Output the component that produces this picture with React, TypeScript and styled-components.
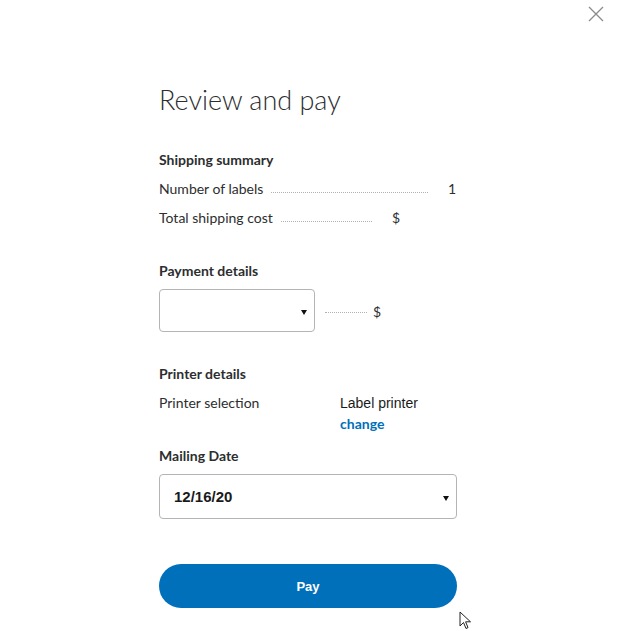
import React from 'react';
import styled, { createGlobalStyle } from 'styled-components';

const GlobalStyle = createGlobalStyle`
  html, body {
    margin: 0;
    padding: 0;
    background: #fff;
  }
  body {
    font-family: Lato, "Open Sans", sans-serif;
    color: #2c2e2f;
  }
`;

const Page = styled.div`
  position: relative;
  width: 624px;
  height: 631px;
  overflow: hidden;
  background: #fff;
`;

const CloseButton = styled.button`
  position: absolute;
  top: 5px;
  right: 19px;
  width: 18px;
  height: 18px;
  padding: 0;
  border: 0;
  background: none;
  cursor: pointer;
`;

const Content = styled.div`
  display: flex;
  flex-direction: column;
  width: 298px;
  margin-left: 159px;
  padding-top: 83px;
`;

const Title = styled.h1`
  margin: 0 0 28px;
  font-size: 27px;
  line-height: 34px;
  font-weight: 300;
  color: #2c2e2f;
`;

const SectionTitle = styled.h2<{ $gap?: number }>`
  margin: 0 0 ${({ $gap }) => $gap ?? 0}px;
  font-size: 14px;
  line-height: 29px;
  font-weight: 700;
  color: #2c2e2f;
`;

const Section = styled.section<{ $after: number }>`
  display: flex;
  flex-direction: column;
  margin-bottom: ${({ $after }) => $after}px;
`;

const SummaryRow = styled.div<{ $width: number }>`
  display: flex;
  align-items: baseline;
  width: ${({ $width }) => $width}px;
  font-size: 14px;
  line-height: 29px;
`;

const Leader = styled.span`
  flex: 1;
  margin-left: 8px;
  border-bottom: 1px dotted #b0b0b0;
  align-self: flex-end;
  margin-bottom: 10px;
`;

const Amount = styled.span`
  margin-left: 20px;
`;

const PaymentRow = styled.div`
  display: flex;
  align-items: center;
  font-size: 14px;
`;

const Select = styled.div<{ $width: number; $height: number }>`
  position: relative;
  display: flex;
  align-items: center;
  box-sizing: border-box;
  width: ${({ $width }) => $width}px;
  height: ${({ $height }) => $height}px;
  padding: 0 14px;
  border: 1px solid #b4b4b4;
  border-radius: 4px;
  background: #fff;
  font-family: "Liberation Sans", Arial, sans-serif;
  font-size: 15px;
  font-weight: 700;
  color: #1a1a1a;
`;

const Caret = styled.span`
  position: absolute;
  right: 7px;
  top: 50%;
  margin-top: -1px;
  width: 0;
  height: 0;
  border-left: 3px solid transparent;
  border-right: 3px solid transparent;
  border-top: 5px solid #111;
`;

const PaymentLeader = styled.span`
  width: 42px;
  margin: 4px 6px 0 10px;
  border-bottom: 1px dotted #b0b0b0;
`;

const Dollar = styled.span`
  margin-top: 2px;
`;

const PrinterRow = styled.div`
  display: grid;
  grid-template-columns: 181px auto;
  font-size: 14px;
  line-height: 29px;
`;

const PrinterValue = styled.div`
  display: flex;
  flex-direction: column;
  padding-top: 7px;
`;

const PrinterName = styled.span`
  font-family: "Liberation Sans", Arial, sans-serif;
  font-size: 14px;
  line-height: 17px;
  color: #1a1a1a;
`;

const ChangeLink = styled.a`
  font-size: 14px;
  line-height: 24px;
  font-weight: 700;
  color: #0070ba;
  text-decoration: none;
  cursor: pointer;
`;

const PayButton = styled.button`
  width: 298px;
  height: 44px;
  margin-top: 45px;
  border: 0;
  border-radius: 22px;
  background: #0070ba;
  color: #fff;
  font-family: "Liberation Sans", Arial, sans-serif;
  font-size: 13px;
  font-weight: 700;
  cursor: pointer;
`;

const Pointer = styled.svg`
  position: absolute;
  left: 459px;
  top: 611px;
`;

export default function App() {
  return (
    <Page>
      <GlobalStyle />
      <CloseButton aria-label="Close">
        <svg width="18" height="18" viewBox="0 0 18 18">
          <path d="M2 2 L16 16 M16 2 L2 16" stroke="#8a8a8a" strokeWidth="1.3" fill="none" />
        </svg>
      </CloseButton>
      <Content>
        <Title>Review and pay</Title>

        <Section $after={24}>
          <SectionTitle>Shipping summary</SectionTitle>
          <SummaryRow $width={297}>
            <span>Number of labels</span>
            <Leader />
            <Amount>1</Amount>
          </SummaryRow>
          <SummaryRow $width={241}>
            <span>Total shipping cost</span>
            <Leader />
            <Amount>$</Amount>
          </SummaryRow>
        </Section>

        <Section $after={27}>
          <SectionTitle $gap={4}>Payment details</SectionTitle>
          <PaymentRow>
            <Select $width={156} $height={43}>
              <Caret />
            </Select>
            <PaymentLeader />
            <Dollar>$</Dollar>
          </PaymentRow>
        </Section>

        <Section $after={5}>
          <SectionTitle>Printer details</SectionTitle>
          <PrinterRow>
            <span>Printer selection</span>
            <PrinterValue>
              <PrinterName>Label printer</PrinterName>
              <ChangeLink>change</ChangeLink>
            </PrinterValue>
          </PrinterRow>
        </Section>

        <Section $after={0}>
          <SectionTitle $gap={4}>Mailing Date</SectionTitle>
          <Select $width={298} $height={45}>
            12/16/20
            <Caret />
          </Select>
        </Section>

        <PayButton>Pay</PayButton>
      </Content>
      <Pointer width="13" height="19" viewBox="0 0 13 19">
        <path d="M1 1 L1 15 L4.5 11.5 L7 17.5 L9 16.6 L6.6 10.8 L11.5 10.8 Z" fill="#fff" stroke="#222" strokeWidth="1" strokeLinejoin="round" />
      </Pointer>
    </Page>
  );
}
